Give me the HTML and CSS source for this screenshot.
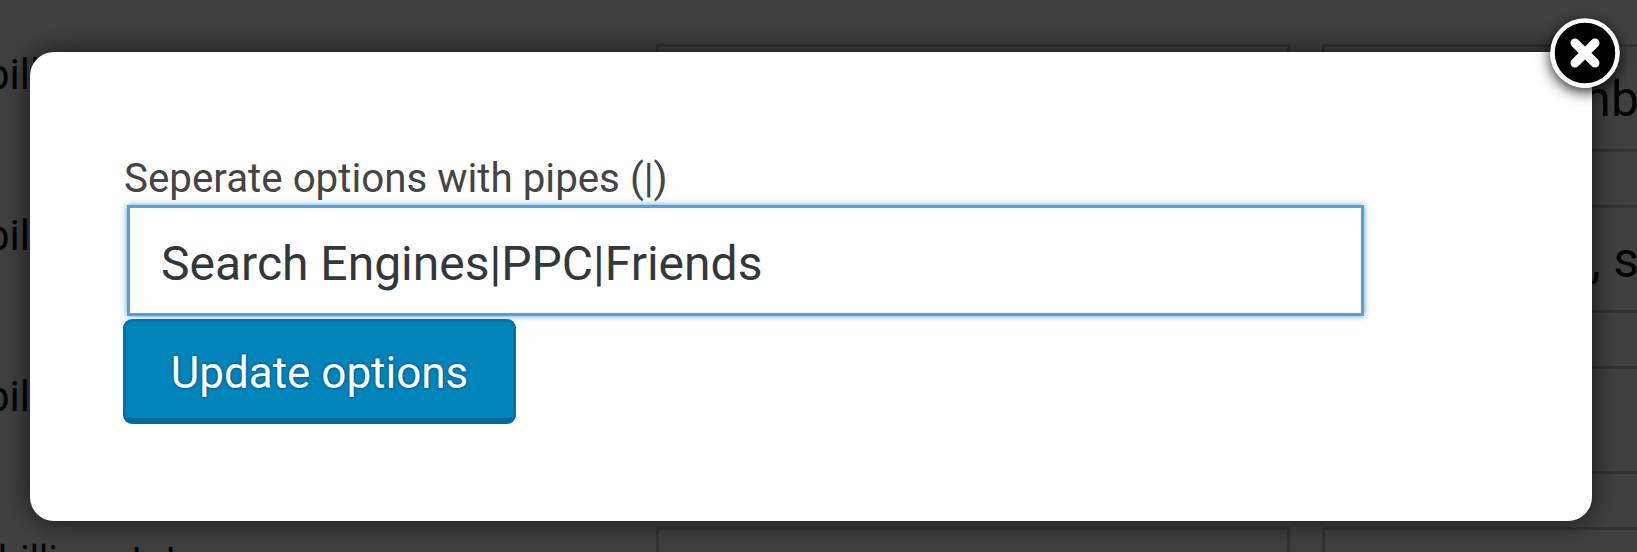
FILE: index.html
```html
<!DOCTYPE html>
<html lang="en">
<head>
    <meta charset="UTF-8">
    <title>Checkout fields</title>
    <link rel="stylesheet" href="styles.css">
</head>
<body>
    <!-- Page behind the popup -->
    <main class="fields">
        <div class="fields__row">
            <div class="fields__label">billing_phone</div>
            <div class="fields__box"></div>
            <div class="fields__box fields__box--text">Phone nb</div>
        </div>
        <div class="fields__row">
            <div class="fields__label">billing_address_2</div>
            <div class="fields__box"></div>
            <div class="fields__box fields__box--text">Apartment, s</div>
        </div>
        <div class="fields__row">
            <div class="fields__label">billing_city</div>
            <div class="fields__box"></div>
            <div class="fields__box"></div>
        </div>
        <div class="fields__row">
            <div class="fields__label fields__label--last">billing state</div>
            <div class="fields__box"></div>
            <div class="fields__box"></div>
        </div>
    </main>

    <!-- Popup -->
    <div class="overlay">
        <div class="modal">
            <form class="options">
                <label class="options__label" for="options">Seperate options with pipes (|)</label>
                <input class="options__input" type="text" id="options" value="Search Engines|PPC|Friends">
                <button class="options__button" type="button">Update options</button>
            </form>
            <a href="#" class="modal__close" aria-label="Close">
                <svg viewBox="0 0 70 70" width="70" height="70">
                    <circle cx="35" cy="35" r="32.5" fill="#000" stroke="#fff" stroke-width="4.5"/>
                    <path d="M25 25 L45 45 M45 25 L25 45" stroke="#fff" stroke-width="9" stroke-linecap="round"/>
                </svg>
            </a>
        </div>
    </div>
</body>
</html>
```

FILE: styles.css
```css
* {
    box-sizing: border-box;
}

html,
body {
    height: 100%;
    margin: 0;
    overflow: hidden;
    background: #fff;
    font-family: Roboto, sans-serif;
}

/* Page behind the popup */
.fields {
    display: flex;
    flex-direction: column;
    gap: 53px;
    height: 100%;
    padding-top: 44px;
}

.fields__row {
    display: grid;
    grid-template-columns: 624px 634px 340px;
    column-gap: 32px;
    flex: none;
    height: 108px;
    align-items: center;
}

.fields__row .fields__label {
    margin-left: -14px;
    padding-bottom: 48px;
    font-size: 42px;
    color: #111;
    white-space: nowrap;
}

.fields__row .fields__label--last {
    margin-left: -2px;
    padding-bottom: 42px;
    font-size: 39px;
}

.fields__box {
    height: 100%;
    border: 3px solid #ccc;
}

.fields__box--text {
    display: flex;
    justify-content: flex-end;
    align-items: center;
    padding: 2px 20px 0 0;
    font-size: 50px;
    color: #111;
    white-space: nowrap;
    overflow: hidden;
}

.overlay {
    position: absolute;
    top: 0;
    left: 0;
    right: 0;
    bottom: 0;
    padding: 52px 45px 31px 30px;
    background: rgba(0, 0, 0, 0.75);
}

.modal {
    position: relative;
    height: 100%;
    padding: 100px 94px 0;
    background: #fff;
    border-radius: 24px;
    box-shadow: 0 0 28px rgba(0, 0, 0, 0.65);
}

.modal__close {
    position: absolute;
    top: -34px;
    right: -28px;
    width: 70px;
    height: 70px;
    border-radius: 50%;
    box-shadow: 0 4px 14px rgba(0, 0, 0, 0.85);
}

.modal__close svg {
    display: block;
    filter: blur(0.6px);
}

/* Form */
.options {
    display: flex;
    flex-direction: column;
    align-items: flex-start;
}

.options__label {
    font-size: 40.3px;
    line-height: 53px;
    color: #444;
}

.options__input {
    width: 1237px;
    height: 111px;
    margin-left: 3px;
    padding: 6px 31px 0;
    border: 3px solid #5b9dd9;
    border-radius: 0;
    outline: none;
    box-shadow: 0 0 6px rgba(30, 140, 190, 0.8);
    font-family: inherit;
    font-size: 48px;
    color: #32373c;
}

.options__button {
    width: 393px;
    height: 102px;
    margin-top: 3px;
    margin-left: -1px;
    padding: 6px 0 0;
    background: #0085ba;
    border: 3px solid #0073aa;
    border-bottom-color: #006799;
    border-radius: 9px;
    box-shadow: 0 3px 0 #006799;
    font-family: inherit;
    font-size: 44px;
    color: #fff;
    text-shadow: 0 -1px 2px #006799, 1px 0 2px #006799, 0 1px 2px #006799, -1px 0 2px #006799;
}
```
